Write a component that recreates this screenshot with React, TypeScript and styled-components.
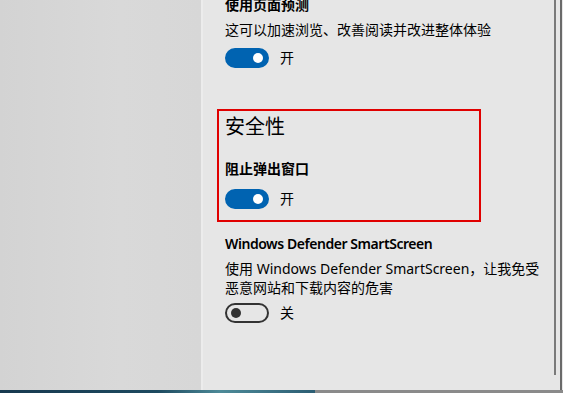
import React from "react";
import styled, { createGlobalStyle } from "styled-components";

const GlobalStyle = createGlobalStyle`
  html, body {
    margin: 0;
    padding: 0;
    width: 563px;
    height: 393px;
    overflow: hidden;
    background: #d6d6d6;
  }
  body {
    font-family: "Segoe UI", "Noto Sans", "Noto Sans CJK SC", sans-serif;
    color: #000;
  }
`;

const Screen = styled.div`
  display: flex;
  flex-direction: column;
  width: 563px;
  height: 393px;
`;

const Main = styled.div`
  display: flex;
  flex: 1;
  min-height: 0;
`;

const Backdrop = styled.div`
  width: 201px;
  background: linear-gradient(90deg, #d3d3d3 0%, #d9d9d9 60%, #d7d7d7 100%);
`;

const Panel = styled.div`
  flex: 1;
  display: flex;
  background: #e6e6e6;
  border-left: 2px solid #ececec;
  overflow: hidden;
`;

const Content = styled.div`
  flex: 1;
  padding: 0 0 0 22px;
  margin-top: -5px;
`;

const Scrollbar = styled.div`
  width: 8px;
  display: flex;
  justify-content: space-between;
  padding-right: 1px;
`;

const ScrollThumb = styled.div`
  width: 2px;
  height: 375px;
  background: #7a7a7a;
`;

const ScrollEdge = styled.div`
  width: 2px;
  background: #6a6a6a;
`;

const BottomStrip = styled.div`
  height: 3px;
  display: flex;
`;

const Desktop = styled.div`
  width: 315px;
  background: linear-gradient(90deg, #17394f 0%, #1d4a60 50%, #4d8a98 70%, #2b5d73 100%);
`;

const PanelEdge = styled.div`
  flex: 1;
  background: #8a8a8a;
`;

const Section = styled.div<{ $top?: number }>`
  margin-top: ${({ $top }) => $top ?? 0}px;
`;

const Highlight = styled.div`
  margin-top: 41px;
  margin-left: -8px;
  width: 254px;
  border: 2px solid #e00000;
  padding: 2px 0 11px 6px;
`;

const GroupTitle = styled.div`
  font-size: 20px;
  line-height: 28px;
  font-weight: 400;
`;

const SettingTitle = styled.div<{ $latin?: boolean }>`
  font-size: 14px;
  line-height: 20px;
  font-weight: ${({ $latin }) => ($latin ? 600 : 700)};
  letter-spacing: ${({ $latin }) => ($latin ? "-0.45px" : "0")};
`;

const Description = styled.div`
  font-size: 14px;
  line-height: 19px;
  margin-top: 5px;
  width: 320px;
`;

const ToggleRow = styled.div<{ $top: number }>`
  display: flex;
  align-items: center;
  gap: 11px;
  margin-top: ${({ $top }) => $top}px;
  font-size: 14px;
  line-height: 20px;
`;

const Track = styled.div<{ $on: boolean }>`
  box-sizing: border-box;
  width: 44px;
  height: 20px;
  border-radius: 10px;
  display: flex;
  align-items: center;
  justify-content: ${({ $on }) => ($on ? "flex-end" : "flex-start")};
  padding: 0 4px;
  background: ${({ $on }) => ($on ? "#0063b1" : "transparent")};
  border: 2px solid ${({ $on }) => ($on ? "#0063b1" : "#333333")};
`;

const Knob = styled.div<{ $on: boolean }>`
  width: 10px;
  height: 10px;
  border-radius: 50%;
  background: ${({ $on }) => ($on ? "#ffffff" : "#333333")};
`;

function Toggle({ on, top }: { on: boolean; top: number }) {
  return (
    <ToggleRow $top={top}>
      <Track $on={on}>
        <Knob $on={on} />
      </Track>
      <span>{on ? "开" : "关"}</span>
    </ToggleRow>
  );
}

export default function App() {
  return (
    <>
      <GlobalStyle />
      <Screen>
        <Main>
          <Backdrop />
          <Panel>
            <Content>
              <Section>
                <SettingTitle>使用页面预测</SettingTitle>
                <Description>这可以加速浏览、改善阅读并改进整体体验</Description>
                <Toggle on top={9} />
              </Section>

              <Highlight>
                <GroupTitle>安全性</GroupTitle>
                <Section $top={18}>
                  <SettingTitle>阻止弹出窗口</SettingTitle>
                  <Toggle on top={10} />
                </Section>
              </Highlight>

              <Section $top={12}>
                <SettingTitle $latin>Windows Defender SmartScreen</SettingTitle>
                <Description>
                  使用 Windows Defender SmartScreen，让我免受恶意网站和下载内容的危害
                </Description>
                <Toggle on={false} top={6} />
              </Section>
            </Content>
            <Scrollbar>
              <ScrollThumb />
              <ScrollEdge />
            </Scrollbar>
          </Panel>
        </Main>
        <BottomStrip>
          <Desktop />
          <PanelEdge />
        </BottomStrip>
      </Screen>
    </>
  );
}
